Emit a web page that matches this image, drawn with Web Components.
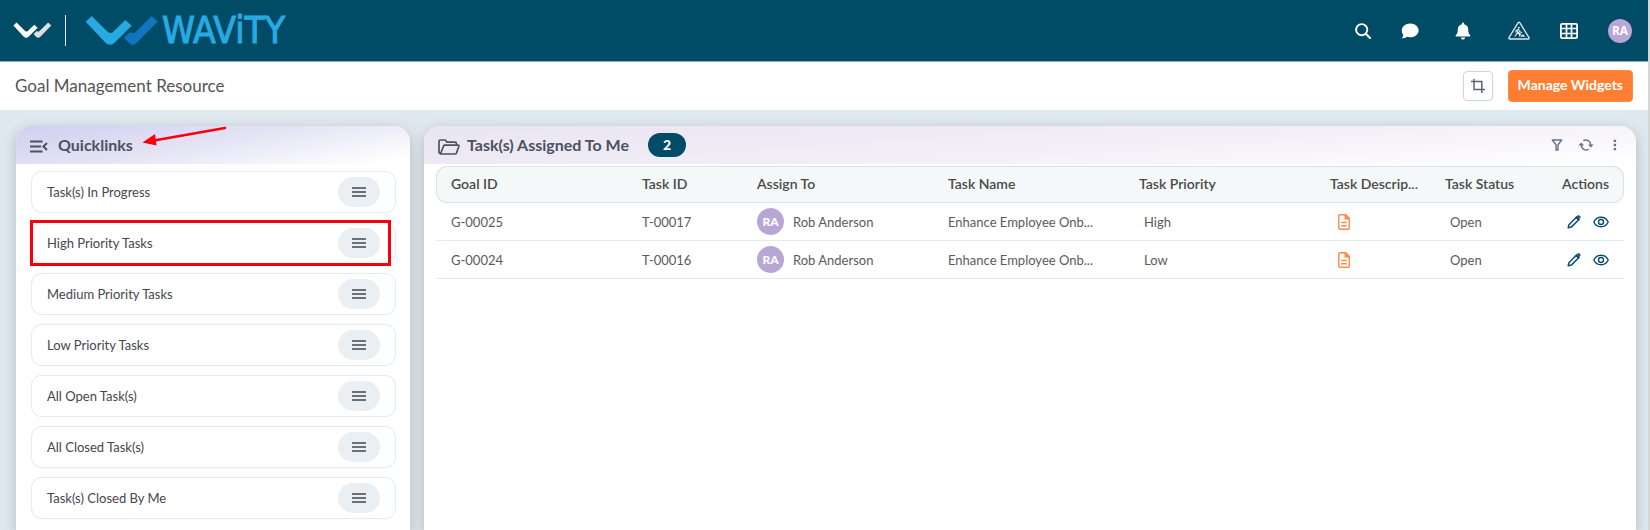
<!DOCTYPE html>
<html lang="en">
<head>
<meta charset="utf-8">
<title>Goal Management Resource</title>
<style>
  body { margin: 0; font-family: Lato, "Open Sans", sans-serif; color: #4a4e57; }
</style>
</head>
<body>
<goal-dashboard></goal-dashboard>
<script>
const ICONS = {
  search: [16, 16, '<circle cx="6.7" cy="6.7" r="5.6" fill="none" stroke="currentColor" stroke-width="1.9"/><path d="M10.8 10.8L15 15" stroke="currentColor" stroke-width="2.2" stroke-linecap="round"/>'],
  chat: [18, 16, '<path d="M9.3 .6C14 .6 17.6 3.6 17.6 7.4S14 14.2 9.3 14.2c-1.2 0-2.3-.2-3.3-.5C4.700 14.700 2.800 15.300.6 15.300c1-1 1.700-2.300 1.800-3.300C1.400 10.800.8 9.200.8 7.400.8 3.600 4.500.6 9.300.6z" fill="currentColor"/>'],
  bell: [16, 18, '<path d="M8 .5c.7 0 1.100.5 1.100 1.100v.6c2.600.5 4.100 2.600 4.100 5.200 0 3.300.8 4.600 2 5.700.4.500.2 1.400-.6 1.400H1.400c-.8 0-1-.9-.6-1.400 1.200-1.100 2-2.400 2-5.700 0-2.600 1.500-4.700 4.100-5.200v-.6C6.900 1 7.300.5 8 .5zM5.900 15.500h4.200c0 1.200-.9 2.100-2.100 2.100s-2.100-.9-2.100-2.100z" fill="currentColor"/>'],
  works: [22, 19, '<path d="M10.200 1.700c.4-.7 1.200-.7 1.600 0L21 16.600c.4.700 0 1.400-.8 1.400H1.800C1 18 .6 17.300 1 16.600z" fill="none" stroke="currentColor" stroke-width="1.300"/><circle cx="10.800" cy="6.700" r="1" fill="currentColor"/><path d="M10.300 8.300L8.400 9.300 7.500 11.500M10.300 8.300l1.700 2.500 2 1M9.700 9.700l-.4 2.500-2.600 3.300M9.500 12l2 1.300.3 2.300M8 8.800l5 5" fill="none" stroke="currentColor" stroke-width="1.100"/><path d="M12.500 15.800l1.200-2 1.700-.4 1.800 2.400z" fill="currentColor"/>'],
  grid: [18, 16, '<rect x=".9" y=".9" width="16.200" height="14.200" rx="1.300" fill="none" stroke="currentColor" stroke-width="1.800"/><path d="M1 5.500h16M1 10.500h16M6.500 1v14M11.500 1v14" stroke="currentColor" stroke-width="1.700"/>'],
  crop: [16, 16, '<path d="M4 1v10.500h11M1 3.500h10.800V15" fill="none" stroke="currentColor" stroke-width="1.500"/>'],
  collapse: [18, 13, '<path d="M0 1.500h12.500M0 6.500h11M0 11.500h12.500M17 3l-3.600 3.500L17 10" fill="none" stroke="currentColor" stroke-width="2"/>'],
  menu: [14, 10, '<path d="M0 1h14M0 5h14M0 9h14" stroke="currentColor" stroke-width="1.600"/>'],
  folder: [22, 16, '<path d="M2.500 15L1 13.500V2.200C1 1.400 1.500 1 2.200 1h4.500c.6 0 1 .3 1.300.7L9 3.200h8c.9 0 1.400.5 1.400 1.300v1.700M2.600 14.800L5.600 7c.2-.5.600-.8 1.200-.8H20c.8 0 1.100.500.9 1.100l-2.500 6.900c-.2.500-.6.800-1.100.800H2.500z" fill="none" stroke="currentColor" stroke-width="1.700" stroke-linejoin="round"/>'],
  filter: [12, 12, '<path d="M1.300 1h9.400L7 5.800V11H5V5.800z" fill="none" stroke="currentColor" stroke-width="1.400" stroke-linejoin="round"/>'],
  refresh: [16, 12, '<path d="M5.300 1.700A5 5 0 0 1 12.800 6M10.700 10.300A5 5 0 0 1 3.200 6" fill="none" stroke="currentColor" stroke-width="1.400"/><path d="M10 5.600h5.600l-2.800 3zM.4 6.400H6L3.200 3.400z" fill="currentColor"/>'],
  more: [4, 12, '<path d="M.7 .7h2.400v2.400H.7zM.7 4.800h2.400v2.400H.7zM.7 8.900h2.400v2.400H.7z" fill="currentColor"/>'],
  doc: [12, 16, '<path d="M2 .8h5.800l3.500 3.500V14c0 .7-.5 1.200-1.200 1.200H2c-.7 0-1.200-.5-1.200-1.200V2C.8 1.300 1.300.8 2 .8z" fill="none" stroke="currentColor" stroke-width="1.400"/><path d="M7.200 .8v4h4.200M3.200 8.500h5.600M3.200 11.700h5.600" fill="none" stroke="currentColor" stroke-width="1.400"/><path d="M7.200.8l4.200 4H7.200z" fill="currentColor"/>'],
  edit: [14, 14, '<path d="M1.200 12.800l.7-3.100 7.400-7.400 2.400 2.400-7.400 7.400z" fill="none" stroke="currentColor" stroke-width="1.500" stroke-linejoin="round"/><path d="M8.600 2.300l1-.9 3 3-1 .9zM10.300 1.200c.8-.9 1.600-.9 2.300-.2s.8 1.500 0 2.300z" fill="currentColor" stroke="currentColor" stroke-width=".8"/>'],
  eye: [16, 12, '<path d="M.8 6C2.300 2.900 4.900 1.200 8 1.200S13.700 2.900 15.200 6C13.700 9.100 11.100 10.800 8 10.800S2.300 9.100.8 6z" fill="none" stroke="currentColor" stroke-width="1.400"/><circle cx="8" cy="6" r="2.500" fill="none" stroke="currentColor" stroke-width="1.400"/>']
};

const define = (name, html, setup) => {
  const tpl = document.createElement('template');
  tpl.innerHTML = html;
  customElements.define(name, class extends HTMLElement {
    constructor() {
      super();
      this.attachShadow({ mode: 'open' }).append(tpl.content.cloneNode(true));
    }
    connectedCallback() { if (setup) setup(this, this.shadowRoot); }
  });
};

define('ui-icon', '<style>:host{display:inline-flex}svg{display:block}</style><svg aria-hidden="true"></svg>', (el, root) => {
  const [w, h, body] = ICONS[el.getAttribute('name')];
  const svg = root.querySelector('svg');
  svg.setAttribute('width', w);
  svg.setAttribute('height', h);
  svg.setAttribute('viewBox', `0 0 ${w} ${h}`);
  svg.innerHTML = body;
});

define('wave-mark', `
<style>
  :host { display: block; }
  svg { display: block; width: 100%; }
  .a { fill: var(--mark-a, #27aae1); } .b { fill: var(--mark-b, #1175bd); }
</style>
<svg viewBox="85 15 74 31" aria-hidden="true">
  <path class="b" d="M124 37.700L130 32.300Q133 34.500 136 31.800L151.700 16L157.700 21.700L137.300 42.300Q132.800 47.300 128.300 42.300Z"/>
  <path class="a" d="M91.700 16L107 31.300Q110 34.500 113 32L125.300 20L131.700 25.700L115 42.300Q110 47.300 105 42.300L85.700 21.700Z"/>
</svg>`);

define('user-avatar', `
<style>
  :host { display: inline-flex; align-items: center; justify-content: center; flex: none; width: 27px; height: 27px;
    border-radius: 50%; background: #b8a6d4; color: #fff; font: 900 12px/16px Lato, sans-serif; }
  :host([small]) { width: 24px; height: 24px; font-family: "Open Sans", sans-serif; font-weight: 700; font-size: 12px; }
</style><slot></slot>`);

define('app-header', `
<style>
  :host { display: flex; align-items: center; justify-content: space-between; height: 61px; background: #004b66;
    border-bottom: 1px solid #7fb3c6; color: #fff; }
  .brand, nav { display: flex; align-items: center; }
  .brand { padding-left: 13px; color: #27aae1; text-decoration: none; }
  .mini { width: 39px; --mark-a: #fff; --mark-b: #dcdfe0; }
  .rule { width: 1px; height: 31px; margin: 0 19px 0 13px; background: #e4ecef; }
  .full { width: 74px; margin-right: 3px; }
  .name { font: 37px/40px "DejaVu Sans Condensed", "DejaVu Sans", sans-serif; -webkit-text-stroke: 1px #27aae1; }
  button { display: flex; align-items: center; justify-content: center; width: 46px; height: 40px; padding: 0; border: 0; background: none; color: inherit; }
  .chat { width: 48px; } .bell { width: 58px; } .works { width: 54px; color: #dfe8ec; } .user { width: 56px; }
</style>
<a class="brand" href="#"><wave-mark class="mini"></wave-mark><span class="rule"></span><wave-mark class="full"></wave-mark><span class="name">WAViTY</span></a>
<nav>
  <button aria-label="Search"><ui-icon name="search"></ui-icon></button>
  <button class="chat" aria-label="Chat"><ui-icon name="chat"></ui-icon></button>
  <button class="bell" aria-label="Notifications"><ui-icon name="bell"></ui-icon></button>
  <button class="works" aria-label="Workspace"><ui-icon name="works"></ui-icon></button>
  <button aria-label="Apps"><ui-icon name="grid"></ui-icon></button>
  <button class="user"><user-avatar small>RA</user-avatar></button>
</nav>`);

define('page-bar', `
<style>
  :host { display: flex; align-items: center; gap: 15px; height: 48px; padding: 0 15px; background: #fff; }
  h1 { flex: 1; margin: 0; padding-bottom: 1px; font-size: 17px; font-weight: 400; line-height: 24px; color: #555; }
  button { box-sizing: border-box; font-family: inherit; border-radius: 4px; }
  .crop { display: flex; align-items: center; justify-content: center; width: 30px; height: 30px; padding: 0; border: 1px solid #cfd4dc; background: #fff; color: #5b6470; }
  .manage { height: 32px; padding: 0 9px 2px; border: 1px solid #ff8b45; background: #ff7f32; color: #fff; font-size: 14px; font-weight: 700; line-height: 20px; }
</style>
<h1><slot></slot></h1>
<button class="crop" aria-label="Crop"><ui-icon name="crop"></ui-icon></button>
<button class="manage">Manage Widgets</button>`);

define('widget-card', `
<style>
  :host { display: flex; flex-direction: column; min-width: 0; border-radius: 16px 16px 0 0; background: #fff; box-shadow: 0 4px 14px rgba(120, 140, 135, .5); }
  header { display: flex; align-items: center; gap: var(--gap, 10px); height: 38px; box-sizing: border-box; padding: 0 7px 0 14px; border-radius: 16px 16px 0 0; background: var(--head); color: #4b5260; }
  h2 { margin: 0; font-size: 16px; font-weight: 700; line-height: 24px; }
  slot[name=icon] { display: flex; padding-top: 3px; }
  slot[name=tools] { display: flex; flex: 1; align-items: center; }
</style>
<header><slot name="icon"></slot><h2><slot name="title"></slot></h2><slot name="tools"></slot></header>
<slot></slot>`);

define('quick-link', `
<style>
  :host { position: relative; display: flex; align-items: center; justify-content: space-between; box-sizing: border-box; height: 42px;
    padding: 0 15px; border: 1px solid #e4ecef; border-radius: 11px; box-shadow: 0 0 1px #dfe9ec; }
  a { color: #43474f; font-size: 13px; line-height: 20px; text-decoration: none; }
  button { display: flex; align-items: center; justify-content: center; width: 42px; height: 30px; padding: 0; border: 0; border-radius: 15px; background: #e9eff2; color: #43474f; }
  .mark { display: none; }
  :host([marked]) .mark { display: block; position: absolute; inset: -3px 4px -3px -2px; border: 3px solid #f9000b; pointer-events: none; }
</style>
<a href="#"><slot></slot></a><button aria-label="Menu"><ui-icon name="menu"></ui-icon></button><span class="mark"></span>`);

define('task-table', `
<style>
  :host { display: block; padding: 2px 12px 0; }
  table { width: 100%; table-layout: fixed; border-collapse: separate; border-spacing: 0; font-size: 13px; line-height: 20px; }
  th, td { box-sizing: border-box; padding: 0 0 0 15px; text-align: left; white-space: nowrap; }
  th { height: 37px; padding-bottom: 2px; border: solid #dbe2e2; border-width: 1px 0; background: #f4f8f9; color: #4a4a4a; font-size: 14px; font-weight: 600; }
  th:first-child { border-left-width: 1px; border-radius: 11px 0 0 11px; padding-left: 14px; }
  th:last-child { border-right-width: 1px; border-radius: 0 11px 11px 0; padding-right: 14px; }
  td { height: 38px; border-bottom: 1px solid #e2ebf0; color: #5b5b5b; }
  .inset { padding-left: 20px; }
  .doc { padding-left: 23px; color: #ff8a45; }
  .end { padding-left: 0; padding-right: 15px; text-align: right; }
  .person, .acts { display: flex; align-items: center; gap: 9px; }
  .acts { justify-content: flex-end; gap: 12px; }
  button { display: flex; padding: 0; border: 0; background: none; color: #0b4f6c; }
  .doc button { color: inherit; }
</style>
<table>
  <colgroup><col style="width:191px"><col style="width:115px"><col style="width:191px"><col style="width:191px"><col style="width:191px"><col style="width:115px"><col style="width:114px"><col style="width:80px"></colgroup>
  <thead><tr><th>Goal ID</th><th>Task ID</th><th>Assign To</th><th>Task Name</th><th>Task Priority</th><th>Task Descrip...</th><th>Task Status</th><th class="end">Actions</th></tr></thead>
  <tbody></tbody>
</table>`, (el, root) => {
  const rows = [['G-00025', 'T-00017', 'High'], ['G-00024', 'T-00016', 'Low']];
  root.querySelector('tbody').innerHTML = rows.map(([goal, task, priority]) => `
    <tr><td>${goal}</td><td>${task}</td>
    <td><div class="person"><user-avatar>RA</user-avatar>Rob Anderson</div></td>
    <td>Enhance Employee Onb...</td><td class="inset">${priority}</td>
    <td class="doc"><button aria-label="Description"><ui-icon name="doc"></ui-icon></button></td>
    <td class="inset">Open</td>
    <td class="end"><div class="acts"><button aria-label="Edit"><ui-icon name="edit"></ui-icon></button><button aria-label="View"><ui-icon name="eye"></ui-icon></button></div></td></tr>`).join('');
});

define('goal-dashboard', `
<style>
  :host { display: flex; flex-direction: column; box-sizing: border-box; min-height: 100vh; border-right: 2px solid #d6d6d6; background: #e1e9f0; }
  main { flex: 1; display: grid; grid-template-columns: 394fr 1212fr; gap: 14px; padding: 16px 12px 0 16px; overflow: hidden; }
  .links { position: relative; --head: linear-gradient(170deg, #d0cff0, #e6e5f5 50%, #fff 95%); }
  .tasks { --gap: 7px; --head: linear-gradient(176deg, #e9e4f2, #f3eff7 55%, #fff); }
  .list { display: grid; gap: 9px; padding: 7px 14px 10px 15px; }
  .arrow { position: absolute; left: 126px; top: 0; width: 86px; height: 28px; }
  .count { margin-left: 12px; width: 38px; border-radius: 12px; background: #004b66; color: #fff; font-size: 14px; font-weight: 900; line-height: 24px; text-align: center; }
  .tools { display: flex; margin-left: auto; }
  .tools button { display: flex; align-items: center; justify-content: center; width: 29px; height: 28px; padding: 0; border: 0; background: none; color: #66738a; }
</style>
<app-header></app-header>
<page-bar>Goal Management Resource</page-bar>
<main>
  <widget-card class="links">
    <ui-icon slot="icon" name="collapse"></ui-icon><span slot="title">Quicklinks</span>
    <div class="list">
      <quick-link>Task(s) In Progress</quick-link>
      <quick-link marked>High Priority Tasks</quick-link>
      <quick-link>Medium Priority Tasks</quick-link>
      <quick-link>Low Priority Tasks</quick-link>
      <quick-link>All Open Task(s)</quick-link>
      <quick-link>All Closed Task(s)</quick-link>
      <quick-link>Task(s) Closed By Me</quick-link>
    </div>
    <svg class="arrow" viewBox="0 0 86 28" aria-hidden="true"><path d="M83 2L12 14.500" stroke="#f9000b" stroke-width="2.600" stroke-linecap="round"/><path d="M.5 16.500L13 8l1.500 11.500z" fill="#f9000b"/></svg>
  </widget-card>
  <widget-card class="tasks">
    <ui-icon slot="icon" name="folder"></ui-icon><span slot="title">Task(s) Assigned To Me</span>
    <span slot="tools" class="count">2</span>
    <div slot="tools" class="tools">
      <button aria-label="Filter"><ui-icon name="filter"></ui-icon></button>
      <button aria-label="Refresh"><ui-icon name="refresh"></ui-icon></button>
      <button aria-label="More"><ui-icon name="more"></ui-icon></button>
    </div>
    <task-table></task-table>
  </widget-card>
</main>`);
</script>
</body>
</html>
